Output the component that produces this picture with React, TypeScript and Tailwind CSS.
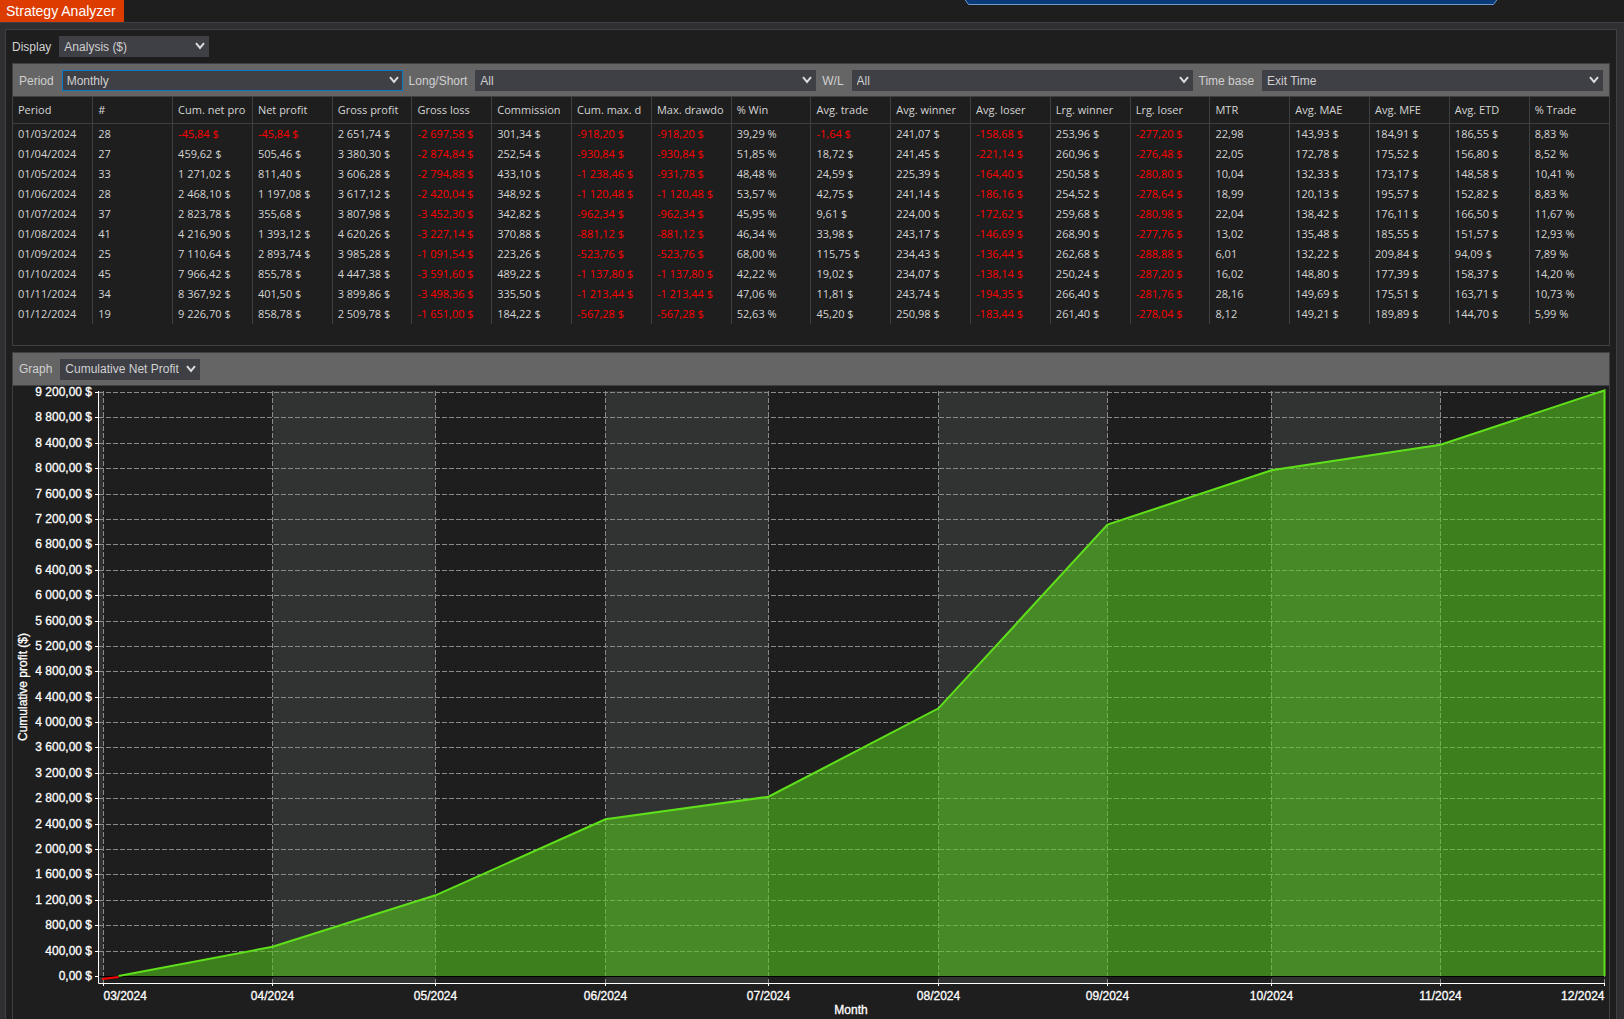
import type { ReactNode } from "react";

const COLUMNS = [
  "Period",
  "#",
  "Cum. net pro",
  "Net profit",
  "Gross profit",
  "Gross loss",
  "Commission",
  "Cum. max. d",
  "Max. drawdo",
  "% Win",
  "Avg. trade",
  "Avg. winner",
  "Avg. loser",
  "Lrg. winner",
  "Lrg. loser",
  "MTR",
  "Avg. MAE",
  "Avg. MFE",
  "Avg. ETD",
  "% Trade",
];

const ROWS = [
  ["01/03/2024", "28", "-45,84 $", "-45,84 $", "2 651,74 $", "-2 697,58 $", "301,34 $", "-918,20 $", "-918,20 $", "39,29 %", "-1,64 $", "241,07 $", "-158,68 $", "253,96 $", "-277,20 $", "22,98", "143,93 $", "184,91 $", "186,55 $", "8,83 %"],
  ["01/04/2024", "27", "459,62 $", "505,46 $", "3 380,30 $", "-2 874,84 $", "252,54 $", "-930,84 $", "-930,84 $", "51,85 %", "18,72 $", "241,45 $", "-221,14 $", "260,96 $", "-276,48 $", "22,05", "172,78 $", "175,52 $", "156,80 $", "8,52 %"],
  ["01/05/2024", "33", "1 271,02 $", "811,40 $", "3 606,28 $", "-2 794,88 $", "433,10 $", "-1 238,46 $", "-931,78 $", "48,48 %", "24,59 $", "225,39 $", "-164,40 $", "250,58 $", "-280,80 $", "10,04", "132,33 $", "173,17 $", "148,58 $", "10,41 %"],
  ["01/06/2024", "28", "2 468,10 $", "1 197,08 $", "3 617,12 $", "-2 420,04 $", "348,92 $", "-1 120,48 $", "-1 120,48 $", "53,57 %", "42,75 $", "241,14 $", "-186,16 $", "254,52 $", "-278,64 $", "18,99", "120,13 $", "195,57 $", "152,82 $", "8,83 %"],
  ["01/07/2024", "37", "2 823,78 $", "355,68 $", "3 807,98 $", "-3 452,30 $", "342,82 $", "-962,34 $", "-962,34 $", "45,95 %", "9,61 $", "224,00 $", "-172,62 $", "259,68 $", "-280,98 $", "22,04", "138,42 $", "176,11 $", "166,50 $", "11,67 %"],
  ["01/08/2024", "41", "4 216,90 $", "1 393,12 $", "4 620,26 $", "-3 227,14 $", "370,88 $", "-881,12 $", "-881,12 $", "46,34 %", "33,98 $", "243,17 $", "-146,69 $", "268,90 $", "-277,76 $", "13,02", "135,48 $", "185,55 $", "151,57 $", "12,93 %"],
  ["01/09/2024", "25", "7 110,64 $", "2 893,74 $", "3 985,28 $", "-1 091,54 $", "223,26 $", "-523,76 $", "-523,76 $", "68,00 %", "115,75 $", "234,43 $", "-136,44 $", "262,68 $", "-288,88 $", "6,01", "132,22 $", "209,84 $", "94,09 $", "7,89 %"],
  ["01/10/2024", "45", "7 966,42 $", "855,78 $", "4 447,38 $", "-3 591,60 $", "489,22 $", "-1 137,80 $", "-1 137,80 $", "42,22 %", "19,02 $", "234,07 $", "-138,14 $", "250,24 $", "-287,20 $", "16,02", "148,80 $", "177,39 $", "158,37 $", "14,20 %"],
  ["01/11/2024", "34", "8 367,92 $", "401,50 $", "3 899,86 $", "-3 498,36 $", "335,50 $", "-1 213,44 $", "-1 213,44 $", "47,06 %", "11,81 $", "243,74 $", "-194,35 $", "266,40 $", "-281,76 $", "28,16", "149,69 $", "175,51 $", "163,71 $", "10,73 %"],
  ["01/12/2024", "19", "9 226,70 $", "858,78 $", "2 509,78 $", "-1 651,00 $", "184,22 $", "-567,28 $", "-567,28 $", "52,63 %", "45,20 $", "250,98 $", "-183,44 $", "261,40 $", "-278,04 $", "8,12", "149,21 $", "189,89 $", "144,70 $", "5,99 %"],
];

// day = days since 01/03/2024
const POINTS = [
  { label: "03/2024", day: 0, value: -45.84 },
  { label: "04/2024", day: 31, value: 459.62 },
  { label: "05/2024", day: 61, value: 1271.02 },
  { label: "06/2024", day: 92, value: 2468.1 },
  { label: "07/2024", day: 122, value: 2823.78 },
  { label: "08/2024", day: 153, value: 4216.9 },
  { label: "09/2024", day: 184, value: 7110.64 },
  { label: "10/2024", day: 214, value: 7966.42 },
  { label: "11/2024", day: 245, value: 8367.92 },
  { label: "12/2024", day: 275, value: 9226.7 },
];

type SelectFieldProps = {
  id: string;
  label: string;
  value: string;
  focused?: boolean;
};

// label and box are direct flex items of the parent, so boxes in one bar share its width
function SelectField({ id, label, value, focused = false }: SelectFieldProps) {
  return (
    <>
      <label htmlFor={id} className="pr-0.5 whitespace-nowrap">
        {label}
      </label>
      <div className="relative min-w-0 flex-1">
        <select
          id={id}
          defaultValue={value}
          className={`block h-[21px] w-full appearance-none border bg-[#3f3f46] pr-5 pl-1 text-[#d0d0d0] outline-none ${
            focused ? "border-[#0a78c8]" : "border-[#3f3f46]"
          }`}
        >
          <option>{value}</option>
        </select>
        <svg
          viewBox="0 0 10 8"
          className="pointer-events-none absolute top-[6px] right-1 h-2 w-2.5"
          fill="none"
          stroke="#dcdcdc"
          strokeWidth="2"
        >
          <path d="M1 1.2 L5 6 L9 1.2" />
        </svg>
      </div>
    </>
  );
}

function Toolbar({ children }: { children: ReactNode }) {
  return (
    <div className="flex h-[33px] items-center gap-1.5 border-b border-[#3f3f46] bg-[#656565] px-1.5 pt-px">
      {children}
    </div>
  );
}

function ResultsTable() {
  return (
    <table className="w-full table-fixed border-collapse text-left font-['Open_Sans',sans-serif] text-[11px] text-[#d4d4d4]">
      <thead>
        <tr className="h-[26px] border-b border-[#3f3f42]">
          {COLUMNS.map((name) => (
            <th
              key={name}
              className="border-r border-[#3f3f42] pl-[5px] font-normal whitespace-nowrap last:border-r-0"
            >
              {name}
            </th>
          ))}
        </tr>
      </thead>
      <tbody>
        {ROWS.map((row) => (
          <tr key={row[0]} className="h-5">
            {row.map((cell, i) => (
              <td
                key={i}
                className={`border-r border-[#3f3f42] pl-[5px] leading-5 whitespace-nowrap last:border-r-0 ${
                  cell.startsWith("-") ? "text-[#ff0000]" : ""
                }`}
              >
                {cell}
              </td>
            ))}
          </tr>
        ))}
      </tbody>
    </table>
  );
}

const LEFT = 90;
const RIGHT = 1591;
const TOP = 5;
const ZERO = 590;
const AXIS = 597;

const xOf = (day: number) => Math.floor(LEFT + (day / 275) * (RIGHT - LEFT)) + 0.5;
const yOf = (value: number) => ZERO - (value / 9200) * 584;
const money = (value: number) =>
  value >= 1000
    ? `${Math.floor(value / 1000)} ${String(value % 1000).padStart(3, "0")},00 $`
    : `${value},00 $`;

function ProfitChart() {
  const ticks = Array.from({ length: 24 }, (_, i) => i * 400);
  const zeroX = xOf((45.84 / 505.46) * 31);
  const line = [
    `${zeroX},${ZERO}`,
    ...POINTS.slice(1).map((p) => `${xOf(p.day)},${yOf(p.value)}`),
  ].join(" ");

  return (
    <svg
      viewBox="0 0 1596 632"
      className="block w-full font-['Liberation_Sans',Arial,sans-serif] text-[12px]"
      role="img"
      aria-label="Cumulative profit by month"
    >
      <g fill="#313333">
        <rect x={86} y={TOP} width={4} height={AXIS - TOP} />
        {POINTS.map((p, i) =>
          i % 2 === 1 && i < 9 ? (
            <rect
              key={p.label}
              x={xOf(p.day)}
              y={TOP}
              width={xOf(POINTS[i + 1].day) - xOf(p.day)}
              height={AXIS - TOP}
            />
          ) : null,
        )}
      </g>

      <g stroke="#8a8a8a" strokeDasharray="5 2">
        {ticks.map((t) => (
          <line key={t} x1={86} x2={RIGHT} y1={Math.round(yOf(t)) + 0.5} y2={Math.round(yOf(t)) + 0.5} />
        ))}
        {POINTS.map((p) => (
          <line key={p.label} x1={xOf(p.day)} x2={xOf(p.day)} y1={TOP} y2={AXIS} />
        ))}
      </g>

      <polygon points={`${line} ${RIGHT},${ZERO}`} fill="#5ad01e" fillOpacity="0.55" />
      <line x1={86} x2={RIGHT} y1={ZERO + 0.5} y2={ZERO + 0.5} stroke="#000" />
      <polyline points={`${line} ${xOf(275)},${ZERO}`} fill="none" stroke="#5fe01a" strokeWidth="2" />
      <path d={`M89 ${ZERO + 3} L${zeroX} ${ZERO + 1}`} stroke="#f00" strokeWidth="2" />

      <g stroke="#fff">
        <path d={`M85.5 ${TOP} V${AXIS + 0.5} H${RIGHT + 1}`} fill="none" />
        {ticks.map((t) => (
          <line key={t} x1={82} x2={86} y1={Math.round(yOf(t)) + 0.5} y2={Math.round(yOf(t)) + 0.5} />
        ))}
        {POINTS.map((p) => (
          <line key={p.label} x1={xOf(p.day)} x2={xOf(p.day)} y1={AXIS} y2={AXIS + 3} />
        ))}
      </g>

      <g fill="#fff" stroke="#fff" strokeWidth="0.3">
        {ticks.map((t) => (
          <text key={t} x={79} y={Math.round(yOf(t)) + 4} textAnchor="end">
            {money(t)}
          </text>
        ))}
        {POINTS.map((p, i) => (
          <text
            key={p.label}
            x={xOf(p.day)}
            y={614}
            textAnchor={i === 0 ? "start" : i === 9 ? "end" : "middle"}
          >
            {p.label}
          </text>
        ))}
        <text x={838} y={628} textAnchor="middle">
          Month
        </text>
        <text transform="translate(14 301) rotate(-90)" textAnchor="middle">
          Cumulative profit ($)
        </text>
      </g>
    </svg>
  );
}

export default function App() {
  return (
    <div className="flex min-h-screen flex-col bg-[#1e1e1e] font-['Liberation_Sans',Arial,sans-serif] text-[12px] text-[#d0d0d0]">
      <header className="relative flex h-[22px]">
        <h1 className="bg-[#dd3c00] pr-2 pl-1.5 text-[14px] leading-[22px] text-white">
          Strategy Analyzer
        </h1>
        <svg viewBox="0 0 534 6" className="absolute top-0 right-[126px] h-1.5 w-[534px]">
          <path d="M0.5 -1 L4.5 4.5 H529.5 L533.5 -1" fill="#0a3a78" stroke="#7098c8" />
        </svg>
      </header>

      <div className="flex flex-1 flex-col border-t border-[#3f3f46] bg-[#2f2f31] pt-1.5 pr-[7px] pl-[5px]">
        <main className="flex flex-1 flex-col border border-b-0 border-[#3f3f46] bg-[#1e1e1e] px-1.5 pt-1.5">
          <div className="flex w-[197px] items-center gap-1.5">
            <SelectField id="display" label="Display" value="Analysis ($)" />
          </div>

          <section className="mt-1.5 border border-[#3f3f46] pb-[21px]">
            <Toolbar>
              <SelectField id="period" label="Period" value="Monthly" focused />
              <SelectField id="side" label="Long/Short" value="All" />
              <SelectField id="wl" label="W/L" value="All" />
              <SelectField id="time-base" label="Time base" value="Exit Time" />
            </Toolbar>
            <ResultsTable />
          </section>

          <section className="mt-1.5 flex-1 border border-b-0 border-[#3f3f46]">
            <Toolbar>
              <div className="flex items-center gap-1.5">
                <SelectField id="graph" label="Graph" value="Cumulative Net Profit" />
              </div>
            </Toolbar>
            <ProfitChart />
          </section>
        </main>
      </div>
    </div>
  );
}
